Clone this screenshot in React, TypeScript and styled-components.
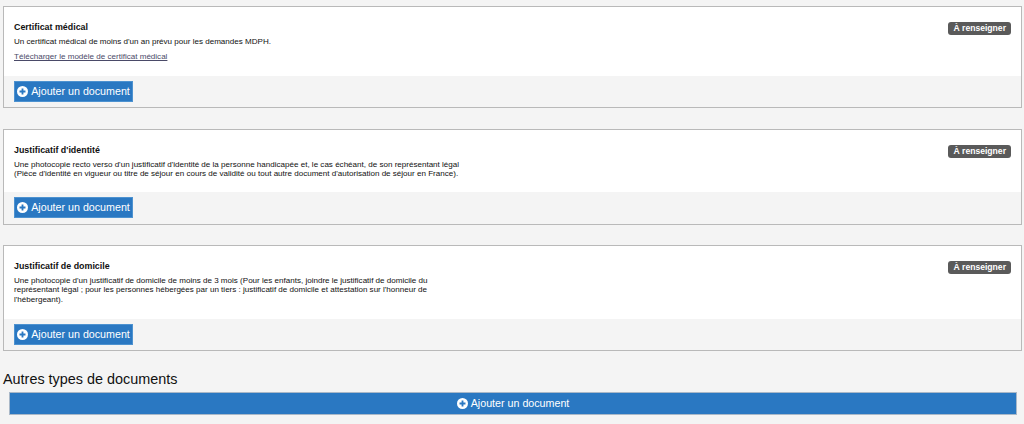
import React from 'react';
import styled, { createGlobalStyle } from 'styled-components';

const GlobalStyle = createGlobalStyle`
	html, body {
		margin: 0;
		padding: 0;
		background: #f4f4f4;
		font-family: "Liberation Sans", Arial, sans-serif;
		color: #111;
	}
`;

const Page = styled.div`
	width: 1024px;
	height: 424px;
	overflow: hidden;
	padding: 6px 2px 0 3px;
	box-sizing: border-box;
`;

const Card = styled.section<{ $gap: number }>`
	border: 1px solid #b9b9b9;
	margin-bottom: ${(props) => props.$gap}px;
	background: #f4f4f4;
`;

const CardBody = styled.div<{ $height: number }>`
	background: #fff;
	height: ${(props) => props.$height}px;
	padding: 15px 10px 0;
	box-sizing: border-box;
	display: flex;
	justify-content: space-between;
	align-items: flex-start;
`;

const CardText = styled.div`
	width: 446px;
`;

const Title = styled.h3`
	margin: 0 0 4px;
	font-size: 8.9px;
	line-height: 11px;
	font-weight: bold;
`;

const Description = styled.p`
	margin: 0;
	font-size: 8.05px;
	line-height: 9.4px;
`;

const ModelLink = styled.a`
	display: block;
	margin-top: 6px;
	font-size: 8.05px;
	line-height: 10px;
	color: #4a4a68;
	text-decoration: underline;
`;

const Badge = styled.span`
	background: #5a5a5a;
	color: #fff;
	font-size: 8.6px;
	font-weight: bold;
	line-height: 13px;
	height: 13px;
	padding: 0 5px;
	border-radius: 3px;
	white-space: nowrap;
`;

const CardFooter = styled.div<{ $height?: number }>`
	height: ${(props) => props.$height ?? 31}px;
	padding: 5px 10px 0;
	box-sizing: border-box;
`;

const AddButton = styled.button<{ $wide?: boolean }>`
	display: flex;
	align-items: center;
	justify-content: center;
	gap: 3px;
	width: ${(props) => (props.$wide ? '1008px' : '119px')};
	height: ${(props) => (props.$wide ? '23px' : '21px')};
	margin: ${(props) => (props.$wide ? '0 0 0 6px' : '0')};
	padding: 0 0 1px;
	border: 1px solid ${(props) => (props.$wide ? '#a9b8c8' : '#4d92d0')};
	background: #2a78c2;
	color: #fff;
	font-family: inherit;
	font-size: 10.7px;
	white-space: nowrap;
`;

const OtherTitle = styled.h2`
	margin: 0 0 4px;
	font-size: 14.4px;
	line-height: 17px;
	font-weight: normal;
	color: #111;
`;

const PlusIcon = () => (
	<svg width="11" height="11" viewBox="0 0 24 24">
		<circle cx="12" cy="12" r="12" fill="#fff" />
		<path d="M12 5.5v13M5.5 12h13" stroke="#2a78c2" strokeWidth="4" />
	</svg>
);

const AddDocument = (props: { wide?: boolean }) => (
	<AddButton type="button" $wide={props.wide}>
		<PlusIcon />
		Ajouter un document
	</AddButton>
);

const App = () => {
	return (
		<>
			<GlobalStyle />
			<Page>
				<Card $gap={21}>
					<CardBody $height={69}>
						<CardText>
							<Title>Certificat médical</Title>
							<Description>Un certificat médical de moins d'un an prévu pour les demandes MDPH.</Description>
							<ModelLink href="#">Télécharger le modèle de certificat médical</ModelLink>
						</CardText>
						<Badge>À renseigner</Badge>
					</CardBody>
					<CardFooter>
						<AddDocument />
					</CardFooter>
				</Card>
				<Card $gap={20}>
					<CardBody $height={62}>
						<CardText>
							<Title>Justificatif d'identité</Title>
							<Description>
								Une photocopie recto verso d'un justificatif d'identité de la personne handicapée et, le cas échéant, de son représentant légal
								<br />
								(Pièce d'identité en vigueur ou titre de séjour en cours de validité ou tout autre document d'autorisation de séjour en France).
							</Description>
						</CardText>
						<Badge>À renseigner</Badge>
					</CardBody>
					<CardFooter $height={32}>
						<AddDocument />
					</CardFooter>
				</Card>
				<Card $gap={20}>
					<CardBody $height={73}>
						<CardText>
							<Title>Justificatif de domicile</Title>
							<Description>
								Une photocopie d'un justificatif de domicile de moins de 3 mois (Pour les enfants, joindre le justificatif de domicile du représentant légal ; pour les personnes hébergées par un tiers : justificatif de domicile et attestation sur l'honneur de l'hébergeant).
							</Description>
						</CardText>
						<Badge>À renseigner</Badge>
					</CardBody>
					<CardFooter>
						<AddDocument />
					</CardFooter>
				</Card>
				<OtherTitle>Autres types de documents</OtherTitle>
				<AddDocument wide />
			</Page>
		</>
	);
};

export default App;
